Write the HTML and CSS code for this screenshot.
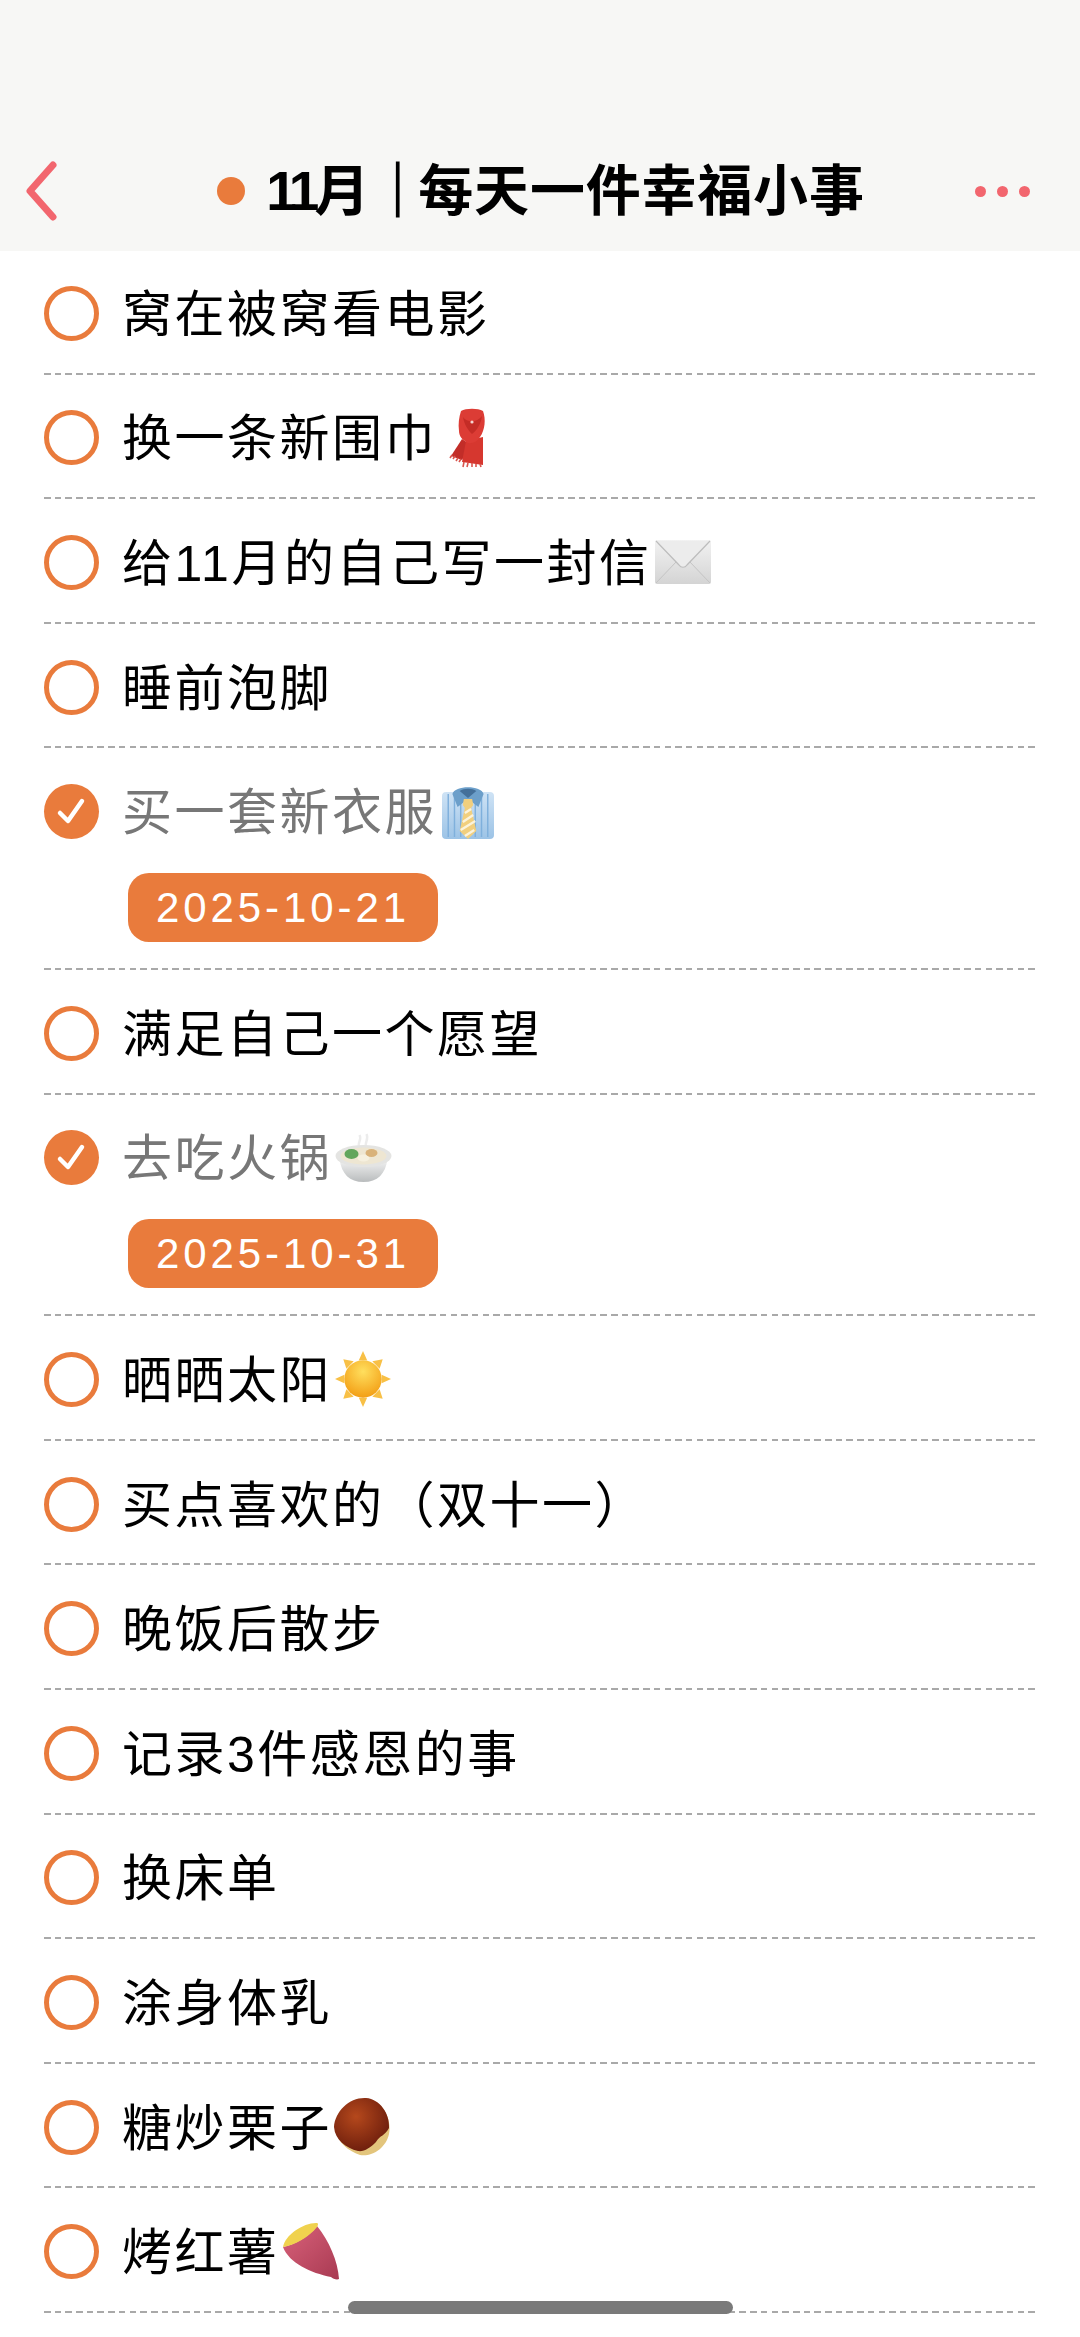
FILE: index.html
```html
<!DOCTYPE html>
<html lang="zh">
<head>
    <meta charset="UTF-8">
    <meta name="viewport" content="width=device-width, initial-scale=1.0">
    <title>每天一件幸福小事</title>
    <link rel="stylesheet" href="styles.css">
</head>
<body>

    <div class="header">
        <svg class="back-btn" viewBox="0 0 32 60"><path d="M28 4 L5 30 L28 56" /></svg>
        <div class="title">
            <span class="title-dot"></span>
            <h1><span class="title-num">11</span>月<span class="title-bar">｜</span>每天一件幸福小事</h1>
        </div>
        <div class="more-btn"><span></span><span></span><span></span></div>
    </div>

    <ul class="todo-list">
        <li class="todo-item">
            <div class="todo-row"><span class="check"></span><span class="todo-text">窝在被窝看电影</span></div>
        </li>
        <li class="todo-item">
            <div class="todo-row">
                <span class="check"></span><span class="todo-text">换一条新围巾</span>
                <!-- 围巾 -->
                <svg class="emoji emoji-scarf" viewBox="0 0 34 58">
                    <path d="M11 30 L0 47 L11 51 L20 36 Z" fill="#c22d28"/>
                    <path d="M15 32 L11 53 L32 56 L32 28 Z" fill="#d6372f"/>
                    <path d="M1 46 L-1 49 M4 47 L2 50 M7 49 L5 52 M10 50 L8 53 M13 53 L12 58 M17 54 L16 58 M21 54 L21 58 M25 55 L25 58 M29 55 L30 58" stroke="#d9554e" stroke-width="1.6"/>
                    <path d="M10 2 C15 -1 27 -1 32 2 C35 10 34 21 29 28 C26 33 21 35 17 34 C11 31 8 27 8 22 C7 15 8 8 10 2 Z" fill="#dc3c35"/>
                    <path d="M12 8 C16 14 26 14 31 7 C30 15 26 21 21 25 C17 21 13 15 12 8 Z" fill="#c42c26"/>
                    <circle cx="21" cy="13" r="1.6" fill="#f5d4d0"/>
                </svg>
            </div>
        </li>
        <li class="todo-item">
            <div class="todo-row">
                <span class="check"></span><span class="todo-text">给11月的自己写一封信</span>
                <!-- 信封 -->
                <svg class="emoji emoji-mail" viewBox="0 0 56 46">
                    <defs>
                        <linearGradient id="mailFill" x1="0" y1="0" x2="0" y2="1">
                            <stop offset="0" stop-color="#f2f2f2"/>
                            <stop offset="1" stop-color="#d4d4d4"/>
                        </linearGradient>
                    </defs>
                    <rect x="0" y="1" width="56" height="44" rx="2" fill="url(#mailFill)"/>
                    <path d="M1 44 L22 22 M55 44 L34 22" stroke="#c4c4c4" stroke-width="1" fill="none"/>
                    <path d="M1 2 L24 26 C26 29 30 29 32 26 L55 2" stroke="#bdbdbd" stroke-width="1.2" fill="#ececec"/>
                </svg>
            </div>
        </li>
        <li class="todo-item">
            <div class="todo-row"><span class="check"></span><span class="todo-text">睡前泡脚</span></div>
        </li>
        <li class="todo-item">
            <div class="todo-row">
                <span class="check done"><svg viewBox="0 0 55 55"><path d="M16 29 L24 37 L38 17" /></svg></span><span class="todo-text done-text">买一套新衣服</span>
                <!-- 衬衫 -->
                <svg class="emoji emoji-shirt" viewBox="0 0 50 54" preserveAspectRatio="none">
                    <defs>
                        <linearGradient id="shirtFill" x1="0" y1="0" x2="0" y2="1">
                            <stop offset="0" stop-color="#cfe3f5"/>
                            <stop offset="1" stop-color="#9cc3e6"/>
                        </linearGradient>
                    </defs>
                    <rect x="0" y="7" width="50" height="47" rx="4" fill="url(#shirtFill)"/>
                    <path d="M6 9 V52 M12 9 V52 M18 14 V52 M32 14 V52 M38 9 V52 M44 9 V52" stroke="#7fb0dc" stroke-width="1.4"/>
                    <path d="M10 9 C12 0 38 0 40 9 L35 22 L25 14 L15 22 Z" fill="#6c9fca"/>
                    <path d="M17 6 C21 3 29 3 33 6 L25 13 Z" fill="#44709a"/>
                    <path d="M21 14 H29 L30 20 L28 23 L33 46 L25 54 L17 46 L22 23 L20 20 Z" fill="#f1cf7e"/>
                    <path d="M22 28 L28 24 M20 37 L30 30 M18 45 L32 36 M22 51 L31 45" stroke="#fbf3dc" stroke-width="2.2"/>
                </svg>
            </div>
            <div class="date-tag">2025-10-21</div>
        </li>
        <li class="todo-item">
            <div class="todo-row"><span class="check"></span><span class="todo-text">满足自己一个愿望</span></div>
        </li>
        <li class="todo-item">
            <div class="todo-row">
                <span class="check done"><svg viewBox="0 0 55 55"><path d="M16 29 L24 37 L38 17" /></svg></span><span class="todo-text done-text">去吃火锅</span>
                <!-- 火锅 -->
                <svg class="emoji emoji-pot" viewBox="0 0 56 50">
                    <defs>
                        <linearGradient id="potFill" x1="0" y1="0" x2="0" y2="1">
                            <stop offset="0" stop-color="#f4f4f4"/>
                            <stop offset="1" stop-color="#b9bcbd"/>
                        </linearGradient>
                    </defs>
                    <path d="M24 14 C21 10 27 7 24 2 M31 14 C28 10 34 7 31 1" stroke="#ececec" stroke-width="2.4" fill="none"/>
                    <path d="M4 26 C6 41 14 49 28 49 C42 49 50 41 52 26 Z" fill="url(#potFill)"/>
                    <ellipse cx="28" cy="23" rx="28" ry="11" fill="#e4e4e2"/>
                    <ellipse cx="28" cy="23" rx="23" ry="8.5" fill="#eee6d2"/>
                    <ellipse cx="16" cy="21" rx="7" ry="5" fill="#62a65c"/>
                    <ellipse cx="28" cy="25" rx="6" ry="3.5" fill="#f6f0df"/>
                    <ellipse cx="36" cy="20" rx="6" ry="4" fill="#d9b27a"/>
                </svg>
            </div>
            <div class="date-tag">2025-10-31</div>
        </li>
        <li class="todo-item">
            <div class="todo-row">
                <span class="check"></span><span class="todo-text">晒晒太阳</span>
                <!-- 太阳 -->
                <svg class="emoji emoji-sun" viewBox="0 0 54 54">
                    <defs>
                        <radialGradient id="sunFill" cx="0.5" cy="0.3" r="0.75">
                            <stop offset="0" stop-color="#ffdf5e"/>
                            <stop offset="1" stop-color="#f29a10"/>
                        </radialGradient>
                    </defs>
                    <g fill="#f8c046">
                        <path d="M27 0 L31 9 H23 Z"/>
                        <path d="M27 54 L31 45 H23 Z"/>
                        <path d="M0 27 L9 23 V31 Z"/>
                        <path d="M54 27 L45 23 V31 Z"/>
                        <path d="M8 8 L18 10 L11 17 Z"/>
                        <path d="M46 8 L43 17 L36 10 Z"/>
                        <path d="M8 46 L11 37 L18 44 Z"/>
                        <path d="M46 46 L36 44 L43 37 Z"/>
                    </g>
                    <circle cx="27" cy="27" r="18" fill="url(#sunFill)"/>
                </svg>
            </div>
        </li>
        <li class="todo-item">
            <div class="todo-row"><span class="check"></span><span class="todo-text">买点喜欢的（双十一）</span></div>
        </li>
        <li class="todo-item">
            <div class="todo-row"><span class="check"></span><span class="todo-text">晚饭后散步</span></div>
        </li>
        <li class="todo-item">
            <div class="todo-row"><span class="check"></span><span class="todo-text">记录3件感恩的事</span></div>
        </li>
        <li class="todo-item">
            <div class="todo-row"><span class="check"></span><span class="todo-text">换床单</span></div>
        </li>
        <li class="todo-item">
            <div class="todo-row"><span class="check"></span><span class="todo-text">涂身体乳</span></div>
        </li>
        <li class="todo-item">
            <div class="todo-row">
                <span class="check"></span><span class="todo-text">糖炒栗子</span>
                <!-- 栗子 -->
                <svg class="emoji emoji-chestnut" viewBox="0 0 56 58">
                    <defs>
                        <radialGradient id="nutFill" cx="0.4" cy="0.35" r="0.7">
                            <stop offset="0" stop-color="#b5481c"/>
                            <stop offset="1" stop-color="#6a1c0c"/>
                        </radialGradient>
                    </defs>
                    <path d="M32 1 C48 2 58 20 55 36 C52 50 38 59 26 57 C14 53 3 44 1 30 C1 14 16 0 32 1 Z" fill="#e3c57c"/>
                    <path d="M32 0 C46 1 56 16 55 30 C51 38 46 37 42 44 C36 50 30 54 24 53 C12 50 1 42 0 29 C1 13 16 -1 32 0 Z" fill="url(#nutFill)"/>
                </svg>
            </div>
        </li>
        <li class="todo-item">
            <div class="todo-row">
                <span class="check"></span><span class="todo-text">烤红薯</span>
                <!-- 红薯 -->
                <svg class="emoji emoji-yam" viewBox="0 0 57 57">
                    <defs>
                        <linearGradient id="yamFill" x1="0" y1="0" x2="1" y2="1">
                            <stop offset="0" stop-color="#d9617a"/>
                            <stop offset="1" stop-color="#a83a52"/>
                        </linearGradient>
                    </defs>
                    <path d="M0 24 C10 22 26 14 34 3 C46 18 55 38 56 56 C54 57 50 56 48 54 C28 50 6 40 0 24 Z" fill="url(#yamFill)"/>
                    <path d="M0 24 C2 12 20 0 33 0 C36 0 35 2 34 4 C26 14 12 22 0 24 Z" fill="#f0d24e"/>
                </svg>
            </div>
        </li>
    </ul>

    <div class="home-bar"></div>

</body>
</html>
```

FILE: styles.css
```css
* {
    box-sizing: border-box;
}
html, body {
    height: 2337px;
    overflow: hidden;
}
body {
    font-family: "Liberation Sans", "Noto Sans CJK SC", sans-serif;
    margin: 0;
    padding: 0;
    background-color: #fff;
    color: #000;
    position: relative;
}
.header {
    height: 251px;
    padding: 161px 50px 0 25px;
    background-color: #f7f7f5;
    display: flex;
    justify-content: space-between;
    align-items: flex-start;
}
.back-btn {
    width: 32px;
    height: 60px;
    fill: none;
    stroke: #f2666e;
    stroke-width: 7;
    stroke-linecap: round;
    stroke-linejoin: round;
}
.title {
    display: flex;
    align-items: center;
    height: 60px;
    margin-left: 50px;
}
.title-dot {
    width: 28px;
    height: 28px;
    margin-right: 21px;
    border-radius: 50%;
    background-color: #e97b3c;
}
.title h1 {
    margin: 0;
    font-size: 55px;
    line-height: 60px;
    font-weight: 700;
    letter-spacing: 0.8px;
    white-space: nowrap;
}
.title-num {
    letter-spacing: -5px;
}
.title-bar {
    letter-spacing: -7px;
    -webkit-text-stroke: 1.2px #000;
}
.more-btn {
    display: flex;
    gap: 11px;
    height: 60px;
    align-items: center;
}
.more-btn span {
    width: 11px;
    height: 11px;
    border-radius: 50%;
    background-color: #f2666e;
}
.todo-list {
    list-style: none;
    padding: 0;
    margin: 0 44px;
}
.todo-item {
    padding: 3px 0 1px;
    background-image: repeating-linear-gradient(90deg, #a9a9a9 0, #a9a9a9 6.5px, transparent 6.5px, transparent 10.7px);
    background-size: 100% 2px;
    background-repeat: no-repeat;
    background-position: bottom;
}
.todo-item:first-child {
    padding-top: 2px;
}
.todo-row {
    height: 120.6px;
    display: flex;
    align-items: center;
}
.check {
    width: 55px;
    height: 55px;
    margin-right: 23px;
    flex: none;
    border: 5px solid #e97b3c;
    border-radius: 50%;
}
.check.done {
    border: none;
    background-color: #e97b3c;
}
.check svg {
    display: block;
    width: 55px;
    height: 55px;
    fill: none;
    stroke: #fff;
    stroke-width: 4.5;
    stroke-linecap: round;
    stroke-linejoin: round;
}
.todo-text {
    padding-top: 3px;
    font-size: 50px;
    line-height: 60px;
    letter-spacing: 2.5px;
    white-space: nowrap;
}
.done-text {
    color: #777;
}
.emoji {
    flex: none;
    display: block;
    overflow: visible;
}
.emoji-scarf {
    width: 34px;
    height: 58px;
    margin-left: 14px;
}
.emoji-mail {
    width: 56px;
    height: 46px;
    margin-left: 4px;
}
.emoji-shirt {
    width: 52px;
    height: 54px;
    margin-left: 5px;
}
.emoji-pot {
    width: 57px;
    height: 50px;
    margin-left: 3px;
}
.emoji-sun {
    width: 56px;
    height: 56px;
    margin-left: 3px;
}
.emoji-chestnut {
    width: 58px;
    height: 58px;
    margin-left: 1px;
}
.emoji-yam {
    width: 57px;
    height: 57px;
    margin-left: 3px;
}
.date-tag {
    width: 310px;
    height: 69px;
    margin: 1px 0 27px 84px;
    border-radius: 21px;
    background-color: #e97b3c;
    color: #fff;
    font-size: 42px;
    line-height: 69px;
    letter-spacing: 3.9px;
    text-align: center;
}
.home-bar {
    position: absolute;
    left: 348px;
    top: 2301px;
    width: 385px;
    height: 13px;
    border-radius: 7px;
    background-color: #7a7a7a;
}
```
